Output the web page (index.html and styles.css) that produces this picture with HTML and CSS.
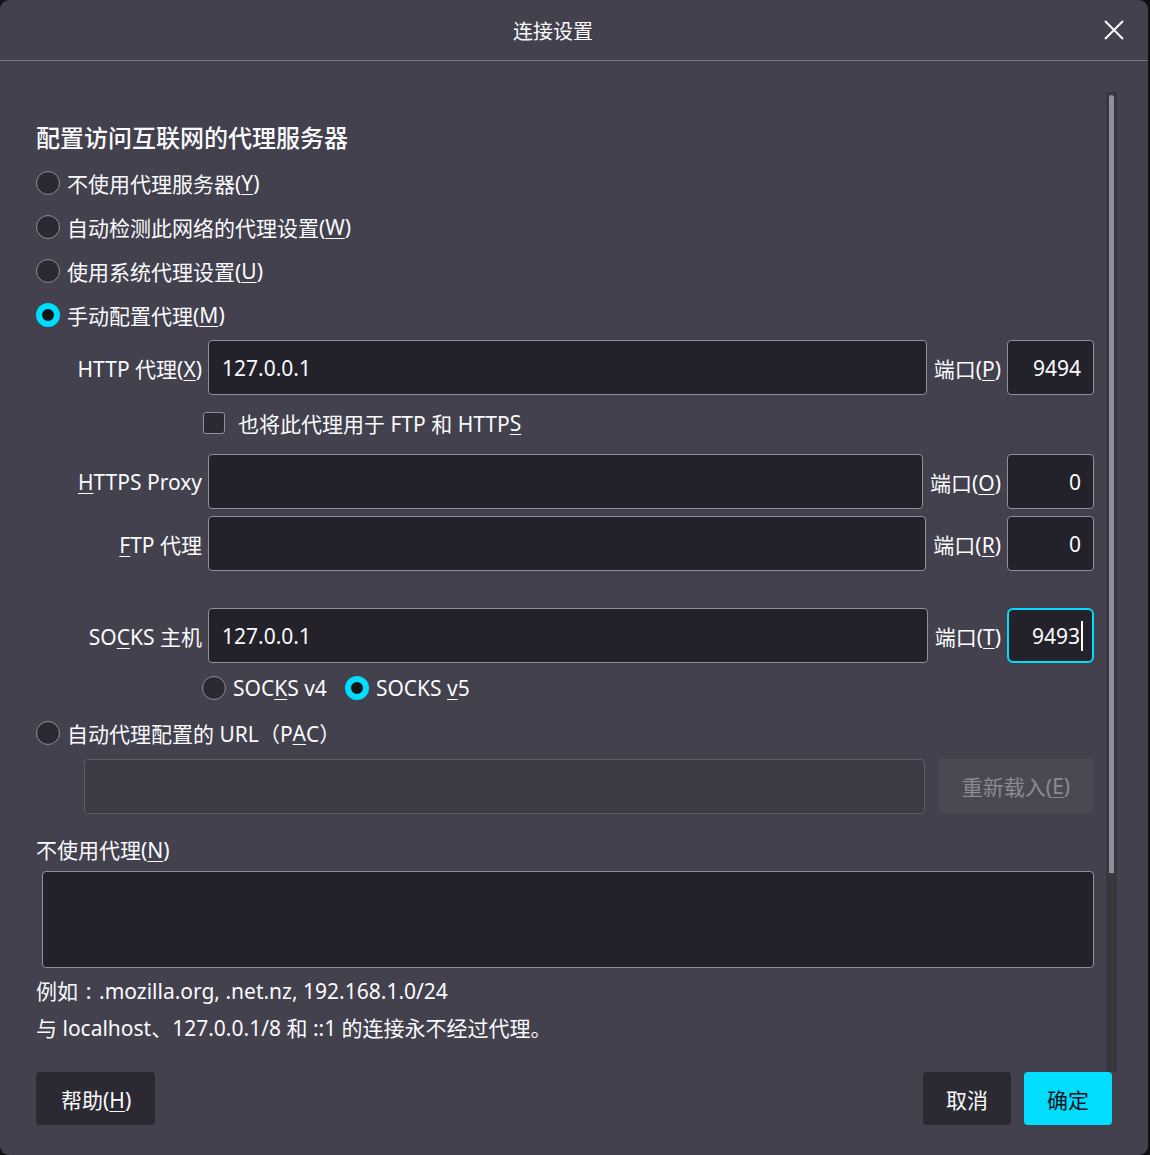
FILE: index.html
```html
<!DOCTYPE html>
<html lang="zh-CN">
<head>
	<meta charset="utf-8">
	<title>连接设置</title>
	<link rel="stylesheet" href="styles.css">
</head>
<body>
	<div class="dialog">
		<div class="titlebar">
			<span class="title">连接设置</span>
			<svg class="close" width="20" height="20" viewBox="0 0 20 20">
				<path d="M1 1 L19 19 M19 1 L1 19" stroke="#fbfbfe" stroke-width="2" fill="none"/>
			</svg>
		</div>

		<div class="main">
			<div class="content">
				<h4>配置访问互联网的代理服务器</h4>

				<div class="radio-row"><span class="radio"></span>不使用代理服务器(<u>Y</u>)</div>
				<div class="radio-row"><span class="radio"></span>自动检测此网络的代理设置(<u>W</u>)</div>
				<div class="radio-row"><span class="radio"></span>使用系统代理设置(<u>U</u>)</div>
				<div class="radio-row"><span class="radio checked"></span>手动配置代理(<u>M</u>)</div>

				<div class="proxy-row first">
					<label class="proxy-label">HTTP 代理(<u>X</u>)</label>
					<div class="field">127.0.0.1</div>
					<label class="port-label">端口(<u>P</u>)</label>
					<div class="field port">9494</div>
				</div>

				<div class="check-row"><span class="checkbox"></span>也将此代理用于 FTP 和 HTTP<u>S</u></div>

				<div class="proxy-row">
					<label class="proxy-label"><u>H</u>TTPS Proxy</label>
					<div class="field"></div>
					<label class="port-label">端口(<u>O</u>)</label>
					<div class="field port">0</div>
				</div>
				<div class="proxy-row tight">
					<label class="proxy-label"><u>F</u>TP 代理</label>
					<div class="field"></div>
					<label class="port-label">端口(<u>R</u>)</label>
					<div class="field port">0</div>
				</div>

				<div class="proxy-row socks">
					<label class="proxy-label">SO<u>C</u>KS 主机</label>
					<div class="field">127.0.0.1</div>
					<label class="port-label">端口(<u>T</u>)</label>
					<div class="field port focused">9493<span class="caret"></span></div>
				</div>

				<div class="version-row">
					<span class="radio"></span><span class="version-text">SOC<u>K</u>S v4</span>
					<span class="radio checked"></span><span>SOCKS <u>v</u>5</span>
				</div>

				<div class="radio-row pac"><span class="radio"></span>自动代理配置的 URL（P<u>A</u>C）</div>

				<div class="pac-row">
					<div class="field disabled"></div>
					<div class="reload">重新载入(<u>E</u>)</div>
				</div>

				<p class="noproxy-label">不使用代理(<u>N</u>)</p>
				<div class="textarea"></div>
				<p class="hint">例如<span class="colon">:</span>.mozilla.org, .net.nz, 192.168.1.0/24</p>
				<p class="hint">与 localhost、127.0.0.1/8 和 ::1 的连接永不经过代理。</p>
			</div>
			<div class="scrollbar"><div class="thumb"></div></div>
		</div>

		<div class="footer">
			<button class="btn help">帮助(<u>H</u>)</button>
			<span class="spacer"></span>
			<button class="btn">取消</button>
			<button class="btn primary">确定</button>
		</div>
	</div>
</body>
</html>
```

FILE: styles.css
```css
html { background: #111114; }
body {
  margin: 0;
  font-family: "Noto Sans", "Noto Sans CJK SC", sans-serif;
  font-size: 21px;
  color: #fbfbfe;
}

u { text-decoration-thickness: 1px; text-underline-offset: 3px; }

.dialog {
  width: 1148px;
  height: 1155px;
  background: #42414d;
  border-radius: 9px;
  display: flex;
  flex-direction: column;
  overflow: hidden;
}

.titlebar {
  height: 61px;
  flex: none;
  border-bottom: 1px solid #77767e;
  position: relative;
  display: flex;
  align-items: center;
  justify-content: center;
  padding: 3px 42px 0 0;
  box-sizing: border-box;
}
.title { font-size: 20px; line-height: 1; }
.close { position: absolute; right: 24px; top: 20px; }

.main {
  display: flex;
  height: 980px;
  margin-top: 31px;
  flex: none;
}
.content {
  flex: 1;
  padding: 0 12px 0 36px;
}
.scrollbar {
  width: 11px;
  flex: none;
  background: #38373f;
  margin-right: 31px;
  padding: 3px 3px 0 3px;
  box-sizing: border-box;
}
.thumb {
  height: 778px;
  background: #8f8f9d;
  border-radius: 3px 3px 0 0;
}

h4 {
  margin: 30px 0 7px;
  font-size: 24px;
  line-height: 32px;
  font-weight: 500;
}

.radio-row {
  height: 44px;
  display: flex;
  align-items: center;
}
.radio {
  width: 22px;
  height: 22px;
  border: 1px solid #8f8f9d;
  border-radius: 50%;
  background: #2b2a33;
  margin-right: 7px;
  flex: none;
}
.radio.checked {
  border: 6px solid #00ddff;
  width: 12px;
  height: 12px;
  background: #15141a;
}

.proxy-row {
  display: flex;
  align-items: center;
  height: 55px;
}
.proxy-row.first { margin-top: 3px; }
.proxy-row.tight { margin-top: 7px; }
.proxy-row.socks { margin-top: 37px; }
.proxy-label {
  width: 166px;
  text-align: right;
  margin-right: 6px;
  white-space: nowrap;
  flex: none;
}
.port-label { margin: 0 6px 0 7px; white-space: nowrap; }

.field {
  flex: 1;
  height: 55px;
  box-sizing: border-box;
  background: #23222b;
  border: 1px solid #8f8f9d;
  border-radius: 4px;
  padding: 0 13px;
  display: flex;
  align-items: center;
}
.field.port {
  flex: none;
  width: 87px;
  justify-content: flex-end;
  padding-right: 12px;
}
.field.focused {
  border: 2px solid #00ddff;
  border-radius: 6px;
  padding-right: 9px;
}
.caret {
  width: 2px;
  height: 30px;
  background: #fbfbfe;
  margin-left: 1px;
}
.field.disabled {
  background: #3b3a45;
  border-color: #5e5d67;
}

.check-row {
  height: 59px;
  display: flex;
  align-items: center;
  padding: 0 0 3px 167px;
  box-sizing: border-box;
}
.checkbox {
  width: 20px;
  height: 20px;
  border: 1px solid #8f8f9d;
  border-radius: 3px;
  background: #2b2a33;
  margin-right: 13px;
}

.version-row {
  height: 50px;
  display: flex;
  align-items: center;
  padding-left: 166px;
}
.version-text { margin-right: 18px; }

.radio-row.pac { height: 40px; }

.pac-row {
  display: flex;
  margin-top: 6px;
  padding-left: 48px;
}
.reload {
  width: 156px;
  height: 54px;
  margin-left: 13px;
  background: #4a4953;
  border-radius: 4px;
  color: #8b8a93;
  display: flex;
  align-items: center;
  justify-content: center;
}

.noproxy-label {
  margin: 22px 0 0;
  line-height: 28px;
}
.textarea {
  margin: 7px 0 0 6px;
  height: 97px;
  box-sizing: border-box;
  background: #23222b;
  border: 1px solid #8f8f9d;
  border-radius: 4px;
}
.hint {
  margin: 9px 0 0;
  line-height: 28px;
}
.colon { display: inline-block; width: 21px; text-align: center; }

.footer {
  display: flex;
  align-items: flex-start;
  padding: 0 36px 0 36px;
  gap: 13px;
}
.spacer { flex: 1; }
.btn {
  height: 53px;
  padding: 0 23px;
  border: none;
  border-radius: 4px;
  background: #2b2a33;
  color: #fbfbfe;
  font-family: inherit;
  font-size: 21px;
}
.btn.help { padding: 0 24px 0 25px; }
.btn.primary {
  background: #00ddff;
  color: #15141a;
}
```
